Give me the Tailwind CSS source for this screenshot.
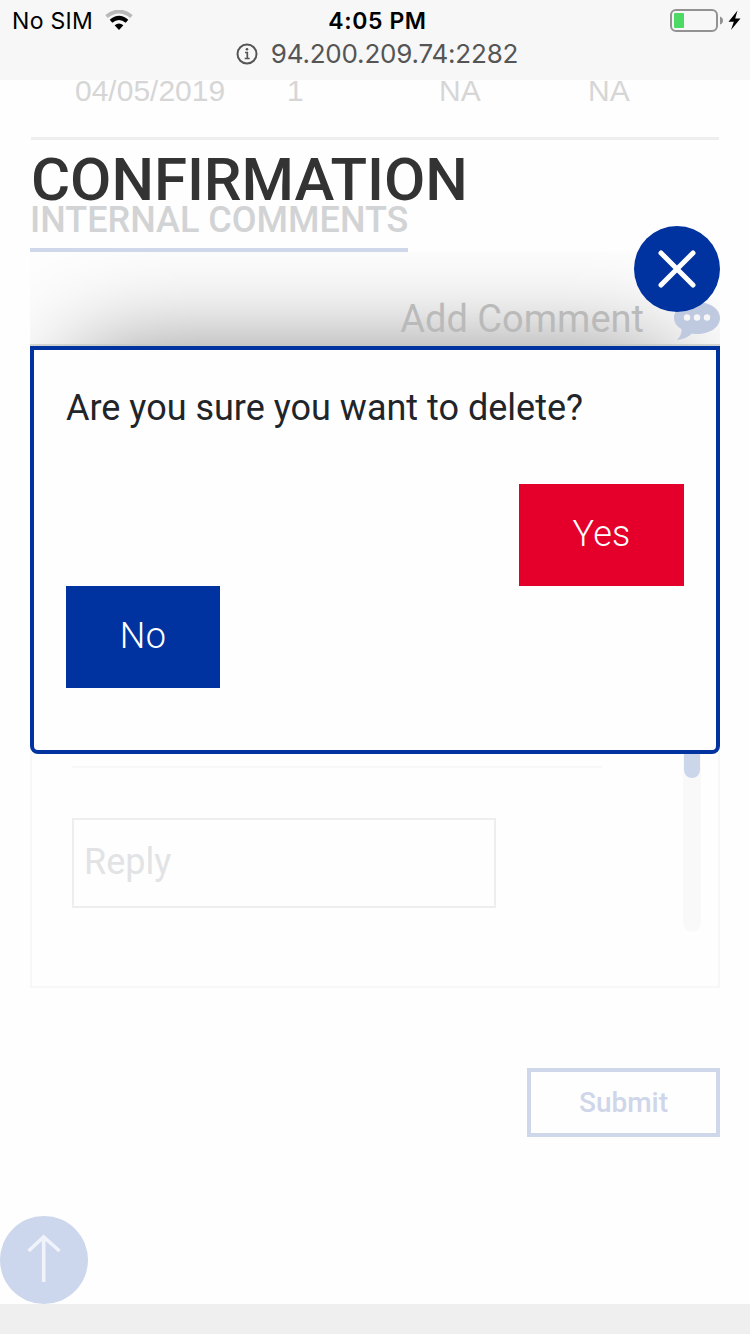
<!DOCTYPE html>
<html lang="en">
<head>
<meta charset="utf-8">
<meta name="viewport" content="width=device-width">
<title>Confirmation</title>
<script src="https://cdn.jsdelivr.net/npm/@tailwindcss/browser@4"></script>
</head>
<body class="bg-white">
<div class="relative flex h-[1334px] w-[750px] flex-col overflow-hidden bg-[#fefefe] font-['Roboto','Liberation_Sans',sans-serif] whitespace-nowrap">
  <!-- status bar -->
  <header class="h-20 shrink-0 bg-[#f7f7f7] font-['Inter','Liberation_Sans',sans-serif]">
    <div class="grid h-10 grid-cols-3 items-center pl-3 pr-2 text-black">
      <div class="flex items-center gap-3">
        <span class="pt-0.5 text-[23px] leading-[38px] tracking-[0.3px]">No SIM</span>
        <svg class="h-[21px] w-7" viewBox="0 0 28 21"><path d="M1.500 6.500Q14-3.500 26.500 6.500" fill="none" stroke="#b9b9b9" stroke-width="3.800"/><path d="M6 11.300Q14 4.500 22 11.300" fill="none" stroke="#000" stroke-width="4"/><path d="M9.600 15.300Q14 11.800 18.400 15.300L14 20Z"/></svg>
      </div>
      <div class="pt-0.5 pl-px text-center text-[23px] leading-[38px] font-semibold tracking-[0.6px]">4:05 PM</div>
      <div class="flex items-center justify-end">
        <svg class="h-6 w-[74px]" viewBox="0 0 74 24"><rect x="3" y="2" width="46" height="21" rx="5" fill="none" stroke="#929292" stroke-width="2"/><rect x="6" y="5" width="10" height="15" rx="1" fill="#4cd964"/><path d="M52 8.500Q55 9.500 55 12.500T52 16.500Z" fill="#929292"/><path d="M69.500 2.500L60.500 13.800H65.800L63 22L72.500 10.500H67.200Z"/></svg>
      </div>
    </div>
    <div class="flex h-7 items-center justify-center gap-[13px] pl-1 text-[#555]">
      <svg class="size-[22px]" viewBox="0 0 22 22" fill="none" stroke="#555" stroke-width="2"><circle cx="11" cy="11" r="9.500"/><path d="M9 9.500H11.300V15.500M8.700 15.500H13.700" stroke-width="1.700"/><circle cx="11" cy="6.300" r="1.300" fill="#555" stroke="none"/></svg>
      <span class="text-[26px] leading-7 tracking-[-0.2px]">94.200.209.74:2282</span>
    </div>
  </header>

  <!-- faded page -->
  <main class="flex flex-col px-[30px]">
    <div class="mx-px flex h-[60px] overflow-hidden border-b-[3px] border-[#eeeeef] font-['Liberation_Sans',sans-serif] text-[30px] leading-[22px] text-[#d6d6d6]">
      <span class="w-[212px] pl-11">04/05/2019</span><span class="w-[196px] pl-11">1</span><span class="w-[149px]">NA</span><span>NA</span>
    </div>
    <div class="mt-[60px] flex h-[52px] w-[378px] items-start border-b-4 border-[#cfd8eb]"><h2 class="text-[36px] leading-10 font-medium text-[#d2d3d5]">INTERNAL COMMENTS</h2></div>
    <div class="relative h-[94px] overflow-hidden">
      <div class="absolute top-[104px] right-[50px] left-[50px] h-[400px] shadow-[0_0_100px_rgba(0,0,0,0.5)]"></div>
      <div class="relative flex h-full items-end justify-end gap-[30px] border-b-2 border-[#c3c7c3]/70 pb-1">
        <span class="text-[38px] leading-[42px] text-[#bababa]">Add Comment</span>
        <svg class="h-[38px] w-[46px]" viewBox="0 0 46 38"><path d="M23 0C36 0 46 7 46 16S36 32 23 32Q20 32 18 31.500Q12 37 3 38Q8 33 7.500 27Q0 23 0 16C0 7 10 0 23 0Z" fill="#bfc9df"/><g fill="#f6f6f6"><circle cx="13" cy="15.500" r="3.200"/><circle cx="23" cy="15.500" r="3.200"/><circle cx="33" cy="15.500" r="3.200"/></g></svg>
      </div>
    </div>
    <section class="flex h-[642px] items-end justify-between border-2 border-[#f7f7f7] pb-[54px] pl-10 pr-[17px]">
      <div class="flex h-[166px] w-[530px] flex-col border-t-2 border-[#f8f8f8] pt-[50px]">
        <div class="flex h-[90px] w-[424px] items-center border-2 border-[#eeeeef] pb-0.5 pl-2.5 text-[36px] text-[#e2e3e5]">Reply</div>
      </div>
      <div class="flex h-[180px] w-[18px] justify-center rounded-b-[9px] bg-[#f9f9f9]"><div class="h-[26px] w-4 rounded-b-lg bg-[#ccd6eb]"></div></div>
    </section>
    <button class="mt-20 flex h-[69px] w-[193px] items-center justify-center self-end border-4 border-[#cfd7eb] text-[28px] font-medium text-[#cfd6ea]">Submit</button>
  </main>
  <div class="mt-[79px] size-[88px] shrink-0">
    <svg class="size-[88px]" viewBox="0 0 88 88"><circle cx="44" cy="44" r="44" fill="#ccd6ec"/><path d="M43.700 66V21M28.500 35L43.700 21L59.500 35" fill="none" stroke="#f0f3fa" stroke-width="3.600"/></svg>
  </div>
  <footer class="h-[30px] shrink-0 bg-[#efefef]"></footer>

  <!-- confirmation dialog -->
  <div class="absolute top-[146px] left-[30px] flex w-[690px] flex-col">
    <div class="flex h-[200px] items-start justify-between">
      <h1 class="pt-px pl-px text-[60px] leading-[66px] font-medium tracking-[-0.05px] text-[#333]">CONFIRMATION</h1>
      <svg class="mt-20 size-[86px] shrink-0" viewBox="0 0 86 86"><circle cx="43" cy="43" r="43" fill="#00339f"/><path d="M27 27L59 59M59 27L27 59" stroke="#fff" stroke-width="5" stroke-linecap="round"/></svg>
    </div>
    <div class="flex h-[408px] flex-col rounded-b-[8px] border-4 border-[#00339f] bg-[#fefefe] px-8 pt-8">
      <p class="h-[102px] text-[36px] leading-[52px] text-[#212529]">Are you sure you want to delete?</p>
      <button class="flex h-[102px] w-[165px] items-center justify-center self-end bg-[#e4002b] pb-0.5 text-[36px] font-light tracking-[0.3px] text-white">Yes</button>
      <button class="flex h-[102px] w-[154px] items-center justify-center bg-[#00339f] pb-0.5 text-[36px] font-light tracking-[0.3px] text-white">No</button>
    </div>
  </div>
</div>
</body>
</html>
